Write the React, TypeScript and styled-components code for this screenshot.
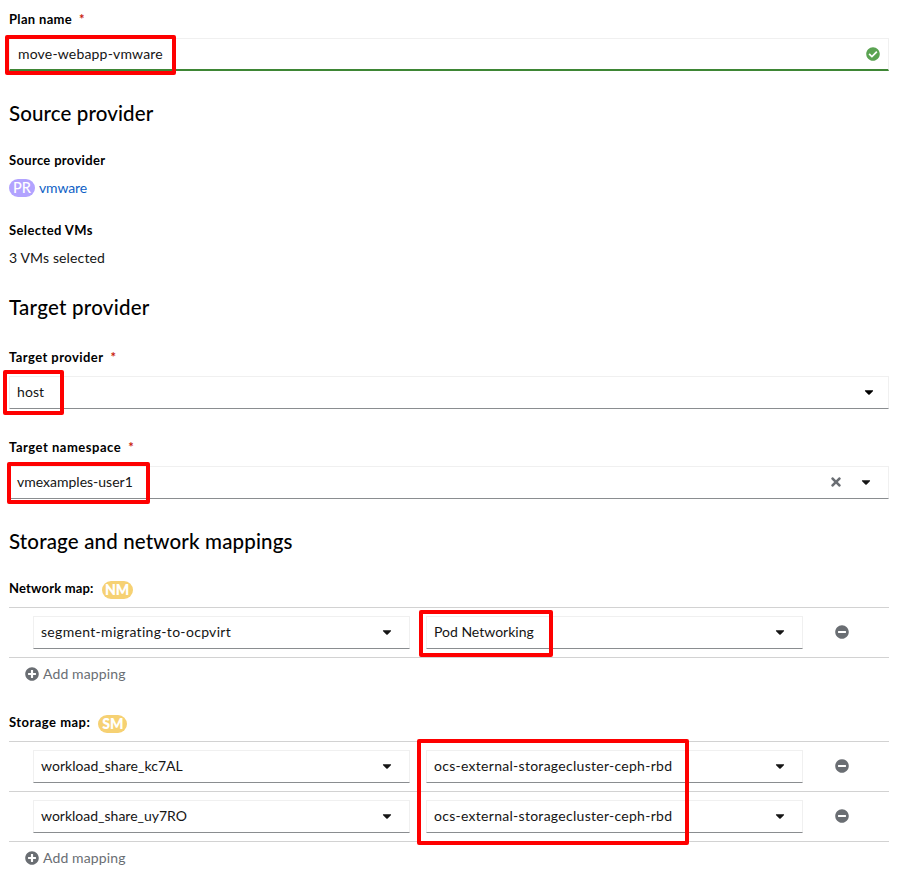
import React from 'react';
import styled, { createGlobalStyle } from 'styled-components';
import {
  FaCaretDown,
  FaCheckCircle,
  FaMinusCircle,
  FaPlusCircle,
  FaTimes,
} from 'react-icons/fa';

const GlobalStyle = createGlobalStyle`
  *, *::before, *::after { box-sizing: border-box; }
  body {
    margin: 0;
    background: #fff;
    color: #151515;
    font-family: Lato, "Liberation Sans", sans-serif;
    font-size: 14px;
    line-height: 21px;
  }
  svg { display: block; }
`;

const Page = styled.main`
  display: flex;
  flex-direction: column;
  width: 897px;
  height: 878px;
  padding: 9px 8px 0 9px;
  overflow: hidden;
`;

const Section = styled.section<{ $gap: number }>`
  display: flex;
  flex-direction: column;
  margin-top: ${(p) => p.$gap}px;
`;

const Heading = styled.h2<{ $tracking: number }>`
  margin: 0 0 22px;
  height: 26px;
  color: #000;
  font-size: 20.5px;
  font-weight: 500;
  line-height: 23px;
  letter-spacing: ${(p) => p.$tracking}px;
`;

const Group = styled.div<{ $gap?: number; $inner?: number }>`
  display: flex;
  flex-direction: column;
  gap: ${(p) => p.$inner ?? 8}px;
  margin-top: ${(p) => p.$gap ?? 0}px;
`;

const Label = styled.div`
  display: flex;
  align-items: center;
  height: 21px;
  color: #000;
  font-size: 13px;
  font-weight: 700;
`;

const Tracked = styled.span<{ $tracking?: number }>`
  letter-spacing: ${(p) => p.$tracking ?? 0}px;
  white-space: nowrap;
`;

const Required = styled.span`
  margin-left: 7px;
  color: #c9190b;
  font-size: 13px;
`;

const Control = styled.div<{ $valid?: boolean; $padLeft?: number; $padRight?: number }>`
  position: relative;
  display: flex;
  align-items: center;
  height: 33px;
  padding: 0 ${(p) => p.$padRight ?? 15}px ${(p) => (p.$valid ? 0 : 1)}px ${(p) => p.$padLeft ?? 7}px;
  border: 1px solid #f0f0f0;
  border-bottom: ${(p) => (p.$valid ? '2px solid #3e8635' : '1px solid #8a8d90')};
  background: #fff;

  > ${Tracked} { margin-bottom: 1px; }
`;

const Icons = styled.div<{ $color?: string }>`
  display: flex;
  align-items: center;
  gap: 16px;
  margin-left: auto;
  color: ${(p) => p.$color ?? '#151515'};
`;

const ClearIcon = styled(FaTimes)`
  color: #6a6e73;
`;

const Highlight = styled.div<{ $x: number; $y: number; $w: number; $h: number }>`
  position: absolute;
  z-index: 1;
  left: ${(p) => p.$x}px;
  top: ${(p) => p.$y}px;
  width: ${(p) => p.$w}px;
  height: ${(p) => p.$h}px;
  border: 4px solid #fe0000;
  border-radius: 2px;
  pointer-events: none;
`;

const Badge = styled.span<{ $color: string; $width: number; $bold?: boolean }>`
  display: inline-flex;
  align-items: center;
  justify-content: center;
  width: ${(p) => p.$width}px;
  height: 18px;
  border-radius: 9px;
  background: ${(p) => p.$color};
  color: #fff;
  font-size: 14.5px;
  font-weight: ${(p) => (p.$bold ? 800 : 500)};
  line-height: 18px;
`;

const MapBadge = styled(Badge)`
  margin: 2px 0 0 8px;
  font-size: 14px;
`;

const ProviderLine = styled.div`
  display: flex;
  align-items: center;
  gap: 4px;
  height: 21px;
`;

const Link = styled.a`
  color: #0f5fc6;
  text-decoration: none;
`;

const Value = styled.div`
  height: 21px;
`;

const MappingTable = styled.div`
  position: relative;
  display: flex;
  flex-direction: column;
  border-top: 1px solid #d2d2d2;
`;

const MappingRow = styled.div`
  display: grid;
  grid-template-columns: 377px 377px 30px;
  column-gap: 16px;
  align-items: center;
  height: 50px;
  padding: 0 0 0 24px;
  border-bottom: 1px solid #d2d2d2;
`;

const RemoveButton = styled.button`
  width: 14px;
  height: 14px;
  margin: 0 0 1px 16px;
  padding: 0;
  border: 0;
  background: none;
  color: #6a6e73;
  font-size: 14px;
`;

const AddButton = styled.button`
  display: flex;
  align-items: center;
  align-self: flex-start;
  gap: 4px;
  height: 21px;
  margin: 5px 0 1px 16px;
  padding: 0;
  border: 0;
  background: none;
  color: #6a6e73;
  font: inherit;
  letter-spacing: 0.13px;
`;

type TrackedText = { text: string; tracking: number };

function FieldLabel({ text, tracking, required }: TrackedText & { required?: boolean }) {
  return (
    <Label>
      <Tracked $tracking={tracking}>{text}</Tracked>
      {required && <Required>*</Required>}
    </Label>
  );
}

function Select({ text, tracking, children }: TrackedText & { children?: React.ReactNode }) {
  return (
    <Control>
      <Tracked $tracking={tracking}>{text}</Tracked>
      <Icons>
        <FaCaretDown />
      </Icons>
      {children}
    </Control>
  );
}

function Mapping({
  source,
  target,
  children,
}: {
  source: TrackedText;
  target: TrackedText;
  children?: React.ReactNode;
}) {
  return (
    <MappingRow>
      <Select {...source} />
      <Select {...target}>{children}</Select>
      <RemoveButton aria-label="Remove mapping">
        <FaMinusCircle />
      </RemoveButton>
    </MappingRow>
  );
}

function AddMapping() {
  return (
    <AddButton>
      <FaPlusCircle />
      Add mapping
    </AddButton>
  );
}

const CEPH: TrackedText = { text: 'ocs-external-storagecluster-ceph-rbd', tracking: 0.28 };

export default function App() {
  return (
    <>
      <GlobalStyle />
      <Page>
        <Group>
          <FieldLabel text="Plan name" tracking={0.33} required />
          <Control $valid $padLeft={8} $padRight={8}>
            <Tracked $tracking={0.18}>move-webapp-vmware</Tracked>
            <Icons $color="#5ba352">
              <FaCheckCircle />
            </Icons>
            <Highlight $x={-5} $y={-4} $w={171} $h={40} />
          </Control>
        </Group>

        <Section $gap={31}>
          <Heading $tracking={0.12}>Source provider</Heading>
          <Group $inner={6}>
            <FieldLabel text="Source provider" tracking={0.33} />
            <ProviderLine>
              <Badge $color="#b2a3ff" $width={26}>PR</Badge>
              <Link><Tracked $tracking={-0.15}>vmware</Tracked></Link>
            </ProviderLine>
          </Group>
          <Group $gap={22} $inner={6}>
            <FieldLabel text="Selected VMs" tracking={0.4} />
            <Value><Tracked $tracking={0.13}>3 VMs selected</Tracked></Value>
          </Group>
        </Section>

        <Section $gap={28}>
          <Heading $tracking={0.25}>Target provider</Heading>
          <Group $gap={3}>
            <FieldLabel text="Target provider" tracking={0.43} required />
            <Control $padRight={12.5}>
              <Tracked $tracking={0.1}>host</Tracked>
              <Icons $color="#000">
                <FaCaretDown />
              </Icons>
              <Highlight $x={-7} $y={-7} $w={61} $h={45} />
            </Control>
          </Group>
          <Group $gap={28}>
            <FieldLabel text="Target namespace" tracking={0.52} required />
            <Control>
              <Tracked $tracking={0}>vmexamples-user1</Tracked>
              <Icons>
                <ClearIcon />
                <FaCaretDown />
              </Icons>
              <Highlight $x={-3} $y={-5} $w={143} $h={42} />
            </Control>
          </Group>
        </Section>

        <Section $gap={31}>
          <Heading $tracking={0.16}>Storage and network mappings</Heading>
          <Group>
            <Label>
              <Tracked $tracking={0.18}>Network map:</Tracked>
              <MapBadge $color="#f6d173" $width={31} $bold>NM</MapBadge>
            </Label>
            <MappingTable>
              <Mapping
                source={{ text: 'segment-migrating-to-ocpvirt', tracking: 0.31 }}
                target={{ text: 'Pod Networking', tracking: 0 }}
              >
                <Highlight $x={-8} $y={-7} $w={134} $h={47} />
              </Mapping>
            </MappingTable>
          </Group>
          <AddMapping />
          <Group $gap={27}>
            <Label>
              <Tracked $tracking={0.48}>Storage map:</Tracked>
              <MapBadge $color="#f6d173" $width={29} $bold>SM</MapBadge>
            </Label>
            <MappingTable>
              <Mapping source={{ text: 'workload_share_kc7AL', tracking: 0.03 }} target={CEPH}>
                <Highlight $x={-10} $y={-12} $w={272} $h={106} />
              </Mapping>
              <Mapping source={{ text: 'workload_share_uy7RO', tracking: 0 }} target={CEPH} />
            </MappingTable>
          </Group>
          <AddMapping />
        </Section>
      </Page>
    </>
  );
}
